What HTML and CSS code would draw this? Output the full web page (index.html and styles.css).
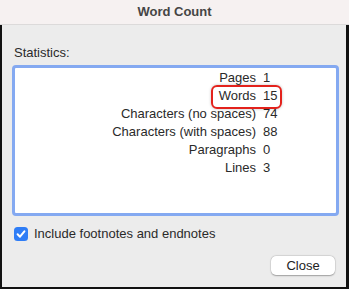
FILE: index.html
```html
<!DOCTYPE html>
<html>
<head>
<meta charset="utf-8">
<link rel="stylesheet" href="styles.css">
</head>
<body>
<div class="window">
  <div class="titlebar">Word Count</div>
  <div class="content">
    <div class="section-label">Statistics:</div>
    <div class="stats-box">
      <div class="stats">
        <span class="label">Pages</span><span class="value">1</span>
        <span class="label">Words</span><span class="value">15</span>
        <span class="label">Characters (no spaces)</span><span class="value">74</span>
        <span class="label">Characters (with spaces)</span><span class="value">88</span>
        <span class="label">Paragraphs</span><span class="value">0</span>
        <span class="label">Lines</span><span class="value">3</span>
      </div>
      <div class="highlight"></div>
    </div>
    <label class="check-row">
      <span class="checkbox">
        <svg width="14" height="14" viewBox="0 0 14 14"><path d="M3.6 7.3 L6 9.7 L10.4 4.3" fill="none" stroke="#fff" stroke-width="2" stroke-linecap="round" stroke-linejoin="round"/></svg>
      </span>
      <span class="check-text">Include footnotes and endnotes</span>
    </label>
    <div class="actions">
      <button class="btn">Close</button>
    </div>
  </div>
</div>
</body>
</html>
```
FILE: styles.css
```css
html, body {
  margin: 0;
  padding: 0;
}
body {
  width: 349px;
  height: 289px;
  overflow: hidden;
  font-family: "Liberation Sans", Arial, sans-serif;
  font-size: 13px;
  color: #2a2a2a;
}
.window {
  display: flex;
  flex-direction: column;
  height: 289px;
}
.titlebar {
  height: 24px;
  line-height: 24px;
  background: #f6f1f1;
  border-bottom: 1px solid #dcdada;
  text-align: center;
  font-weight: bold;
  font-size: 13px;
  color: #454545;
}
.content {
  flex: 1;
  background: #ececec;
  border-left: 2px solid #111;
  border-right: 3px solid #111;
  border-bottom: 2px solid #111;
  padding: 20px 7px 0 10px;
  display: flex;
  flex-direction: column;
}
.section-label {
  line-height: 16px;
  margin-left: 2px;
}
.stats-box {
  position: relative;
  margin-top: 4px;
  height: 151px;
  box-sizing: border-box;
  background: #fff;
  border: 3px solid #84a9f1;
  border-radius: 4px;
  padding-top: 1px;
}
.stats {
  display: grid;
  grid-template-columns: 241px auto;
  column-gap: 7px;
  line-height: 18px;
}
.label {
  text-align: right;
}
.highlight {
  position: absolute;
  left: 196px;
  top: 17px;
  width: 71px;
  height: 24px;
  box-sizing: border-box;
  border: 2px solid #e3221c;
  border-radius: 6px;
  box-shadow: 0 0 3px rgba(0,0,0,0.25);
}
.check-row {
  display: flex;
  align-items: center;
  gap: 6px;
  margin-top: 11px;
  margin-left: 2px;
  height: 14px;
}
.checkbox {
  width: 14px;
  height: 14px;
  border-radius: 3.5px;
  background: #2f7df6;
  display: flex;
}
.check-text {
  line-height: 16px;
}
.actions {
  display: flex;
  justify-content: flex-end;
  margin-top: 15px;
  padding-right: 4px;
}
.btn {
  width: 64px;
  height: 19px;
  padding: 0;
  background: #fff;
  border: none;
  border-radius: 5px;
  box-shadow: 0 0.5px 1.5px rgba(0,0,0,0.3), 0 0 0 0.5px rgba(0,0,0,0.08);
  font-family: "Liberation Sans", Arial, sans-serif;
  font-size: 13px;
  color: #222;
  line-height: 19px;
}
```
